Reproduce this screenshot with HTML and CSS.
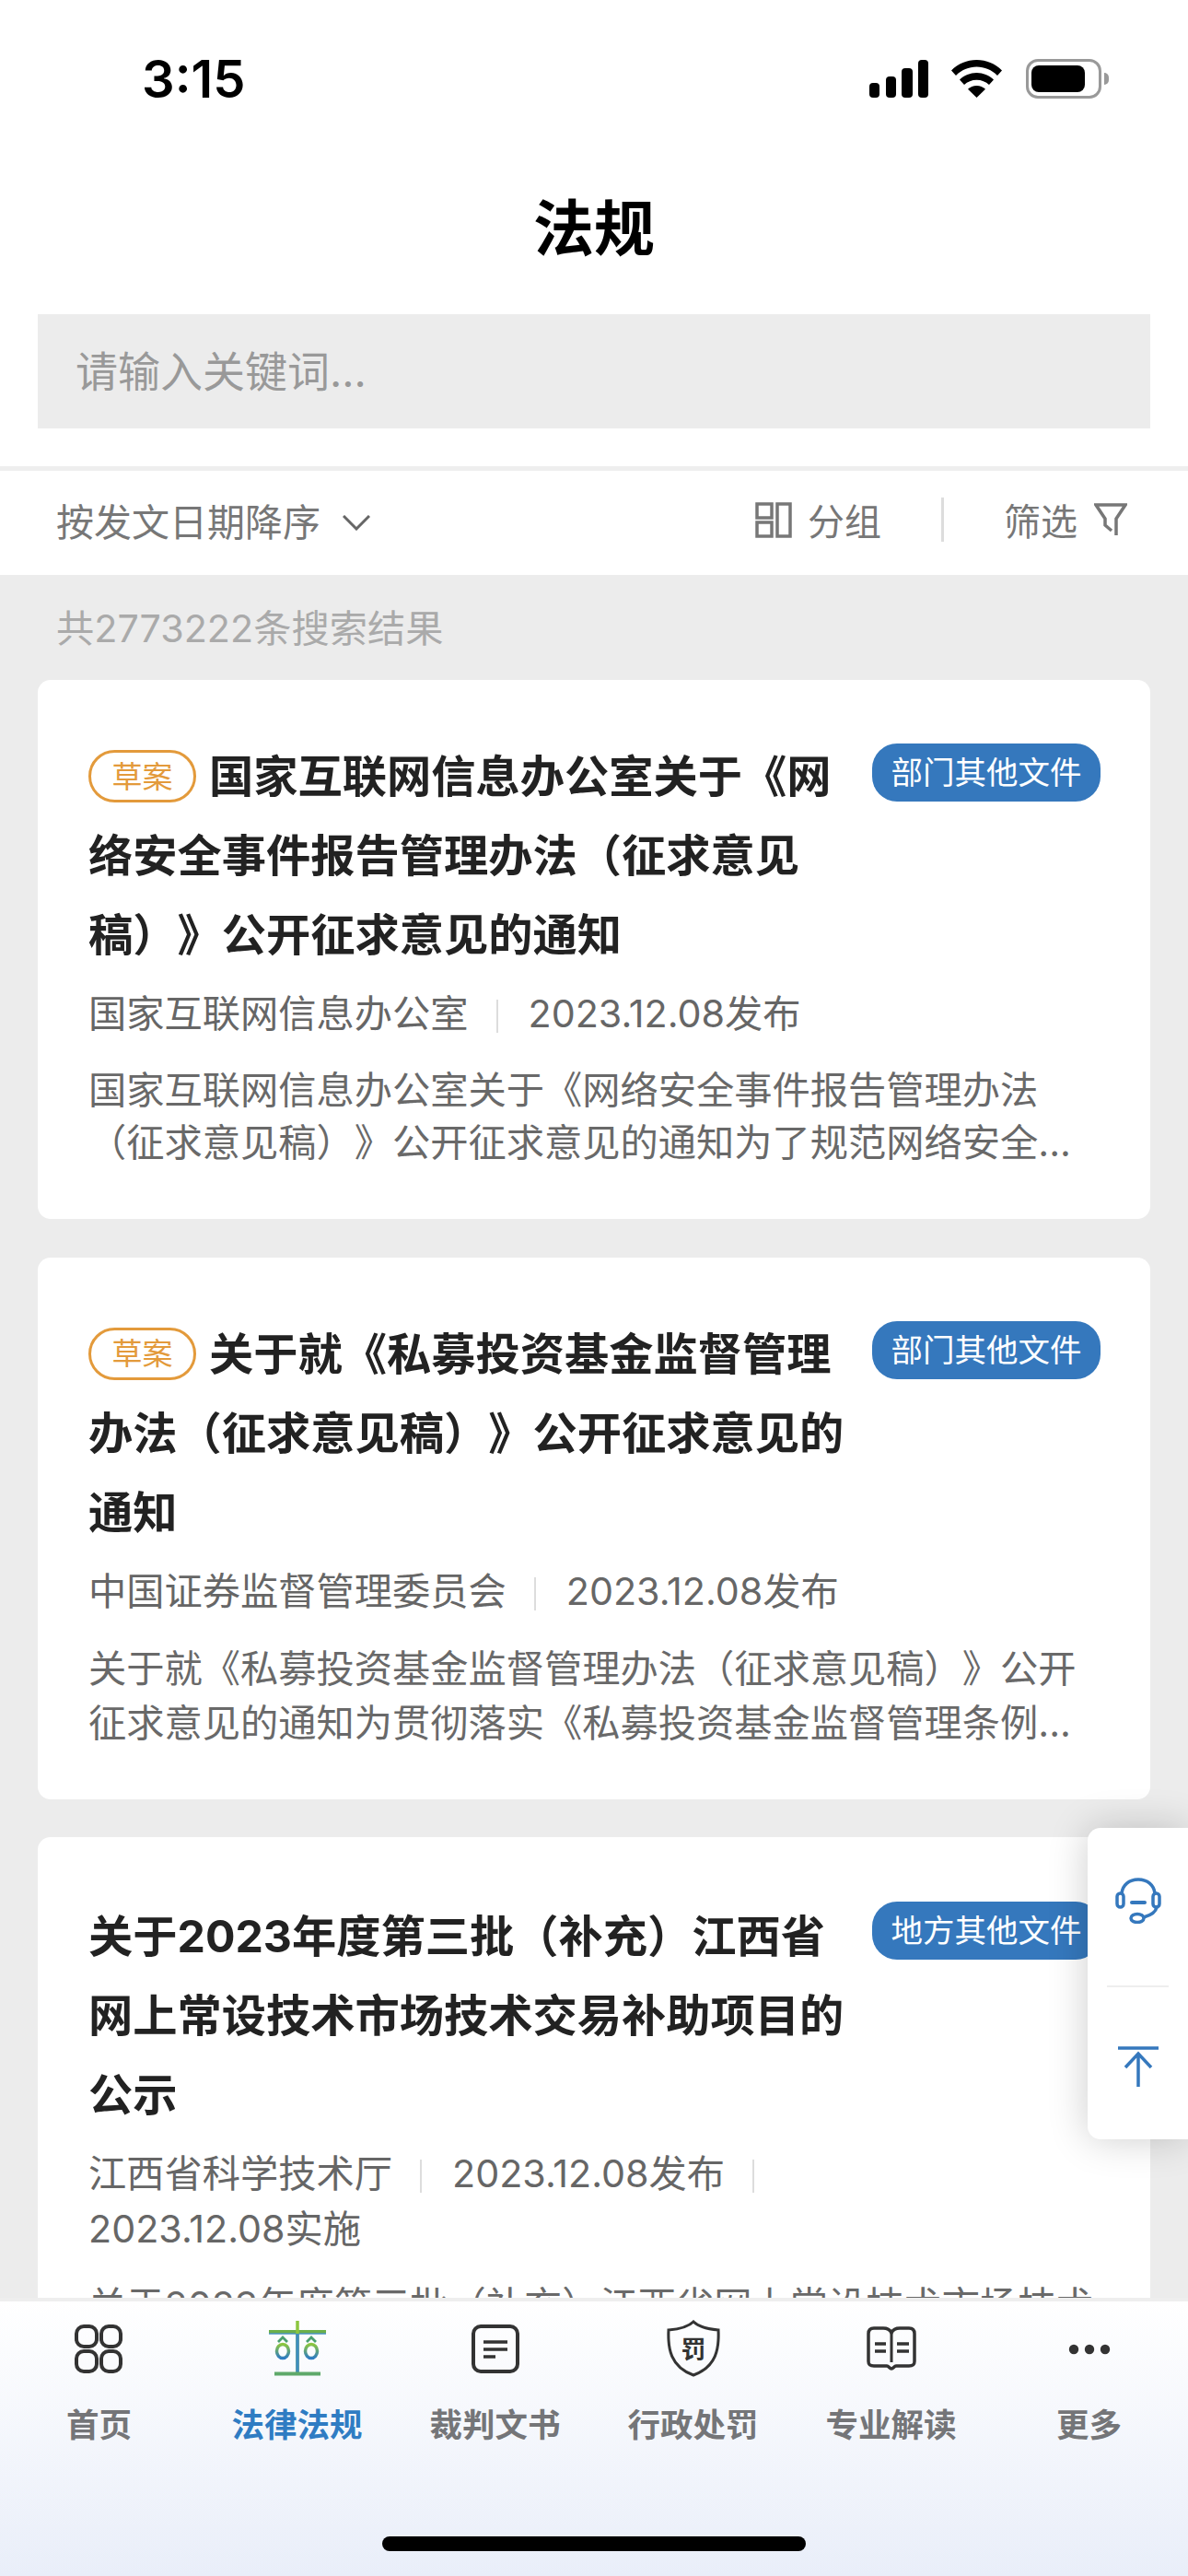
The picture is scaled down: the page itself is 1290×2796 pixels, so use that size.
FILE: index.html
```html
<!DOCTYPE html>
<html lang="zh-CN">
<head>
<meta charset="utf-8">
<title>法规</title>
<link rel="stylesheet" href="styles.css">
</head>
<body>
<div class="app">
  <header class="status">
    <span class="time">3:15</span>
    <div class="status-icons">
      <svg class="signal" width="64" height="41" viewBox="0 0 64 41"><rect x="0" y="25" width="11" height="16" rx="4"/><rect x="18" y="18" width="11" height="23" rx="4"/><rect x="35" y="9" width="12" height="32" rx="4"/><rect x="53" y="0" width="11" height="41" rx="4"/></svg>
      <svg class="wifi" width="55" height="41" viewBox="0 0 55 41"><path d="M27.5 0C17 0 7.5 4 0 11.5l5 5.5C11 11 19 7.5 27.5 7.5S44 11 50 17l5-5.500C47.500 4 38 0 27.500 0z"/><path d="M27.500 14C20.500 14 14 16.800 9 21.500l5 5.500c3.500-3.300 8.300-5.300 13.500-5.300s10 2 13.500 5.300l5-5.500C41 16.800 34.500 14 27.500 14z"/><path d="M27.500 28c-3.700 0-7 1.400-9.500 3.800l9.500 9.200 9.500-9.200C34.500 29.400 31.200 28 27.500 28z"/></svg>
      <div class="battery"><span class="battery-fill"></span></div>
      <span class="battery-cap"></span>
    </div>
  </header>
  <h1 class="page-title">法规</h1>
  <div class="search-wrap"><div class="search">请输入关键词...</div></div>
  <div class="toolbar">
    <div class="sort">
      <span>按发文日期降序</span>
      <svg width="30" height="17" viewBox="0 0 30 17" fill="none"><path d="M1 1l14 14L29 1" stroke="#666" stroke-width="3"/></svg>
    </div>
    <div class="tools">
      <div class="tool tool-group">
        <svg width="40" height="39" viewBox="0 0 40 39" fill="none" stroke="#777" stroke-width="3.500"><rect x="2" y="2" width="16" height="15"/><rect x="2" y="22" width="16" height="15"/><rect x="24" y="2" width="14" height="35"/></svg>
        <span>分组</span>
      </div>
      <span class="tool-sep"></span>
      <div class="tool tool-filter">
        <span>筛选</span>
        <svg width="36" height="36" viewBox="0 0 36 36" fill="none" stroke="#777" stroke-width="3.500"><path d="M24 35V17L34 2H2l10 15v7l7 6"/></svg>
      </div>
    </div>
  </div>
  <div class="count">共2773222条搜索结果</div>
  <main class="list">
    <article class="card card-tagged">
      <div class="head">
        <h2 class="title"><span class="tag">草案</span>国家互联网信息办公室关于《网络安全事件报告管理办法（征求意见稿）》公开征求意见的通知</h2>
        <span class="badge">部门其他文件</span>
      </div>
      <div class="meta"><span>国家互联网信息办公室</span><i class="sep"></i><span>2023.12.08发布</span></div>
      <p class="desc">国家互联网信息办公室关于《网络安全事件报告管理办法（征求意见稿）》公开征求意见的通知为了规范网络安全...</p>
    </article>
    <article class="card card-tagged card-roomy">
      <div class="head">
        <h2 class="title"><span class="tag">草案</span>关于就《私募投资基金监督管理办法（征求意见稿）》公开征求意见的通知</h2>
        <span class="badge">部门其他文件</span>
      </div>
      <div class="meta"><span>中国证券监督管理委员会</span><i class="sep"></i><span>2023.12.08发布</span></div>
      <p class="desc">关于就《私募投资基金监督管理办法（征求意见稿）》公开征求意见的通知为贯彻落实《私募投资基金监督管理条例...</p>
    </article>
    <article class="card">
      <div class="head">
        <h2 class="title">关于2023年度第三批（补充）江西省网上常设技术市场技术交易补助项目的公示</h2>
        <span class="badge">地方其他文件</span>
      </div>
      <div class="meta"><span>江西省科学技术厅</span><i class="sep"></i><span>2023.12.08发布</span><i class="sep"></i><span class="meta-break">2023.12.08实施</span></div>
      <p class="desc">关于2023年度第三批（补充）江西省网上常设技术市场技术交易</p>
    </article>
  </main>
  <aside class="float-panel">
    <button class="float-btn float-btn-top">
      <svg width="50" height="50" viewBox="0 0 50 50" fill="none" stroke="#3578bd" stroke-width="3.500" stroke-linecap="round"><path d="M7 17C8 8 15 2 25 2s17 6 18 15"/><rect x="2" y="17" width="7" height="15" rx="3.500"/><rect x="41" y="17" width="7" height="15" rx="3.500"/><path d="M18 27h14" stroke-width="4"/><path d="M45 32c-1 6-7 9-14 11"/><ellipse cx="24" cy="44" rx="7" ry="4.500"/></svg>
    </button>
    <span class="float-sep"></span>
    <button class="float-btn float-btn-bottom">
      <svg width="46" height="46" viewBox="0 0 46 46" fill="none" stroke="#3578bd" stroke-width="3.500"><path d="M1 2h44"/><path d="M23 44V8M9 23L23 8l14 15"/></svg>
    </button>
  </aside>
  <nav class="tabbar">
    <a class="tab">
      <svg width="56" height="56" viewBox="0 0 56 56" fill="none" stroke="#333" stroke-width="4"><rect x="3" y="4" width="22" height="22" rx="8"/><rect x="30" y="4" width="21" height="22" rx="8"/><rect x="3" y="31" width="22" height="22" rx="8"/><rect x="30" y="31" width="21" height="22" rx="8"/></svg>
      <span>首页</span>
    </a>
    <a class="tab tab-active">
      <svg width="62" height="60" viewBox="0 0 62 60" fill="none">
        <defs><linearGradient id="scale" x1="0" y1="0" x2="0" y2="1"><stop offset="0" stop-color="#8cc63f"/><stop offset="1" stop-color="#2f7cc3"/></linearGradient></defs>
        <path d="M0 12h62" stroke="#6cb04a" stroke-width="4"/><path d="M0 14h62" stroke="#4a93c0" stroke-width="1.500"/>
        <path d="M31 0v56" stroke="#8cc63f" stroke-width="3.500"/><path d="M31 14v42" stroke="#3f8dc0" stroke-width="3.500"/>
        <path d="M6 57.500h50" stroke="#5fa96a" stroke-width="4"/>
        <path d="M10 23l5-5 5 5M41 23l5-5 5 5" stroke="#4aa070" stroke-width="2.800"/>
        <ellipse cx="15" cy="33" rx="6.500" ry="7.500" stroke="url(#scale)" stroke-width="3.500"/>
        <ellipse cx="46" cy="33" rx="6.500" ry="7.500" stroke="url(#scale)" stroke-width="3.500"/>
      </svg>
      <span>法律法规</span>
    </a>
    <a class="tab">
      <svg width="56" height="56" viewBox="0 0 56 56" fill="none" stroke="#333"><rect x="4" y="4" width="48" height="49" rx="8" stroke-width="4"/><path d="M15 21h26M15 29h26M15 37h13" stroke-width="3.500"/></svg>
      <span>裁判文书</span>
    </a>
    <a class="tab">
      <svg width="58" height="62" viewBox="0 0 58 62" fill="none" stroke="#333" stroke-width="3"><path d="M29 2c5 5 15 8 27 9 1 20-2 40-27 49C4 51 1 31 2 11c12-1 22-4 27-9z"/><text class="shield-text" x="29" y="42" text-anchor="middle">罚</text></svg>
      <span>行政处罚</span>
    </a>
    <a class="tab">
      <svg width="56" height="50" viewBox="0 0 56 50" fill="none" stroke="#333"><path d="M28 8c-2-4-5-5-9-5H9C5 3 3 5 3 9v30c0 4 2 5 6 5h14c2 0 3 3 5 3s3-3 5-3h14c4 0 6-1 6-5V9c0-4-2-6-6-6H37c-4 0-7 1-9 5z" stroke-width="3.500"/><path d="M28 8v32" stroke-width="3"/><path d="M10 20h12M10 28h12M34 20h13M34 28h13" stroke-width="3.500"/></svg>
      <span>专业解读</span>
    </a>
    <a class="tab">
      <svg width="56" height="56" viewBox="0 0 56 56" fill="#333"><circle cx="11" cy="29" r="5.200"/><circle cx="28" cy="29" r="5.200"/><circle cx="45" cy="29" r="5.200"/></svg>
      <span>更多</span>
    </a>
    <span class="home-bar"></span>
  </nav>
</div>
</body>
</html>
```
FILE: styles.css
```css
* { box-sizing: border-box; }
html, body { margin: 0; padding: 0; }
body {
  width: 1290px;
  height: 2796px;
  overflow: hidden;
  background: #fff;
  font-family: "Inter", "Noto Sans CJK SC", sans-serif;
  text-spacing-trim: space-all;
}
.app {
  position: relative;
  width: 1290px;
  height: 2796px;
  overflow: hidden;
  background: #ececec;
  display: flex;
  flex-direction: column;
}

/* status bar */
.status {
  height: 170px;
  flex: none;
  background: #fff;
  display: flex;
  justify-content: space-between;
  align-items: center;
  padding: 0 86px 0 154px;
}
.time { font-size: 56px; font-weight: 600; color: #000; line-height: 1; padding-top: 2px; }
.status-icons { display: flex; align-items: center; }
.signal { fill: #000; margin-right: 25px; }
.wifi { fill: #000; margin-right: 26px; }
.battery {
  width: 82px;
  height: 43px;
  border: 3px solid #999;
  border-radius: 13px;
  padding: 4px 15px 4px 3px;
  display: flex;
}
.battery-fill { flex: 1; background: #000; border-radius: 8px; }
.battery-cap {
  width: 5px;
  height: 13px;
  margin-left: 3px;
  background: #999;
  border-radius: 0 6px 6px 0;
}

/* header */
.page-title {
  margin: 0;
  height: 156px;
  flex: none;
  background: #fff;
  color: #000;
  font-size: 66px;
  font-weight: 700;
  line-height: 156px;
  text-align: center;
}
.search-wrap {
  flex: none;
  background: #fff;
  padding: 15px 41px 41px;
}
.search {
  height: 124px;
  background: #ececec;
  padding: 0 41px;
  font-size: 46px;
  color: #999;
  line-height: 124px;
}
.toolbar {
  flex: none;
  height: 118px;
  background: #fff;
  border-top: 5px solid #eee;
  display: flex;
  justify-content: space-between;
  align-items: center;
  padding: 0 66px 7px 61px;
  color: #777;
  font-size: 41px;
}
.sort { display: flex; align-items: center; gap: 24px; }
.sort svg { margin-top: 6px; }
.tools { display: flex; align-items: center; font-size: 40px; }
.tool { display: flex; align-items: center; }
.tool-group { gap: 17px; }
.tool-filter { gap: 18px; }
.tool-sep { width: 3px; height: 48px; background: #ddd; margin: 0 65px; }

.count {
  flex: none;
  height: 114px;
  padding: 0 61px 4px;
  display: flex;
  align-items: center;
  font-size: 41.250px;
  color: #aaa;
}

/* list */
.list { display: flex; flex-direction: column; gap: 41.500px; padding: 0 41px; }
.card {
  background: #fff;
  border-radius: 14px;
  padding: 65px 54px 54px 55px;
  flex: none;
}
.card-tagged { padding-top: 62px; }
.card-tagged .badge { margin-top: 7px; }
.card-roomy { padding-top: 62px; padding-bottom: 53px; }
.head { display: flex; justify-content: space-between; align-items: flex-start; }
.title {
  margin: 0;
  width: 828px;
  font-size: 48.250px;
  line-height: 86px;
  font-weight: 700;
  color: #222;
}
.tag {
  display: inline-flex;
  align-items: center;
  justify-content: center;
  width: 117px;
  height: 57px;
  margin-right: 14px;
  margin-bottom: 8px;
  border: 3.500px solid #e39a3b;
  border-radius: 29px;
  color: #e39a3b;
  font-size: 33px;
  font-weight: 400;
  vertical-align: middle;
}
.badge {
  flex: none;
  margin-top: 5px;
  width: 248px;
  height: 63px;
  border-radius: 27px;
  background: #3578bd;
  color: #fff;
  font-size: 34.500px;
  line-height: 63px;
  text-align: center;
}
.meta {
  display: flex;
  flex-wrap: wrap;
  align-items: center;
  font-size: 41.250px;
  line-height: 60px;
  color: #666;
  padding-top: 12px;
}
.sep { width: 2px; height: 36px; background: #ddd; margin: 6px 33px 0 30px; }
.meta-break { flex: 0 0 100%; }
.desc {
  margin: 25px 0 0;
  font-size: 41.250px;
  line-height: 57px;
  color: #696969;
}
.card-roomy .desc { line-height: 59px; }

/* floating panel */
.float-panel {
  position: absolute;
  top: 1984px;
  right: 0;
  width: 109px;
  height: 338px;
  background: #fff;
  border-radius: 14px 0 0 14px;
  box-shadow: 0 0 44px rgba(0, 0, 0, .2);
  display: flex;
  flex-direction: column;
  align-items: center;
}
.float-btn {
  flex: 1;
  width: 100%;
  border: 0;
  padding: 0;
  background: none;
  display: flex;
  align-items: center;
  justify-content: center;
}
.float-btn-top { padding-bottom: 14px; }
.float-btn-bottom { padding-top: 8px; }
.float-sep { flex: none; width: 67px; height: 2px; background: #eee; }

/* tab bar */
.tabbar {
  position: absolute;
  left: 0;
  right: 0;
  bottom: 0;
  height: 302px;
  border-top: 4px solid #eee;
  background: linear-gradient(180deg, #fff 0%, #e9eef9 100%);
  display: flex;
  align-items: flex-start;
}
.tab {
  flex: 1;
  height: 166px;
  padding-top: 20px;
  display: flex;
  flex-direction: column;
  align-items: center;
  color: #747578;
  font-size: 35.500px;
  font-weight: 600;
}
.tab svg { flex: none; height: 62px; margin-bottom: 28px; }
.tab span { line-height: 50px; }
.tab-active { color: #2f7cc3; }
.shield-text { font-size: 27px; font-weight: 700; fill: #333; stroke: none; font-family: "Noto Sans CJK SC", sans-serif; }
.home-bar {
  position: absolute;
  left: 415px;
  bottom: 27px;
  width: 460px;
  height: 16px;
  border-radius: 8px;
  background: #000;
}
```
